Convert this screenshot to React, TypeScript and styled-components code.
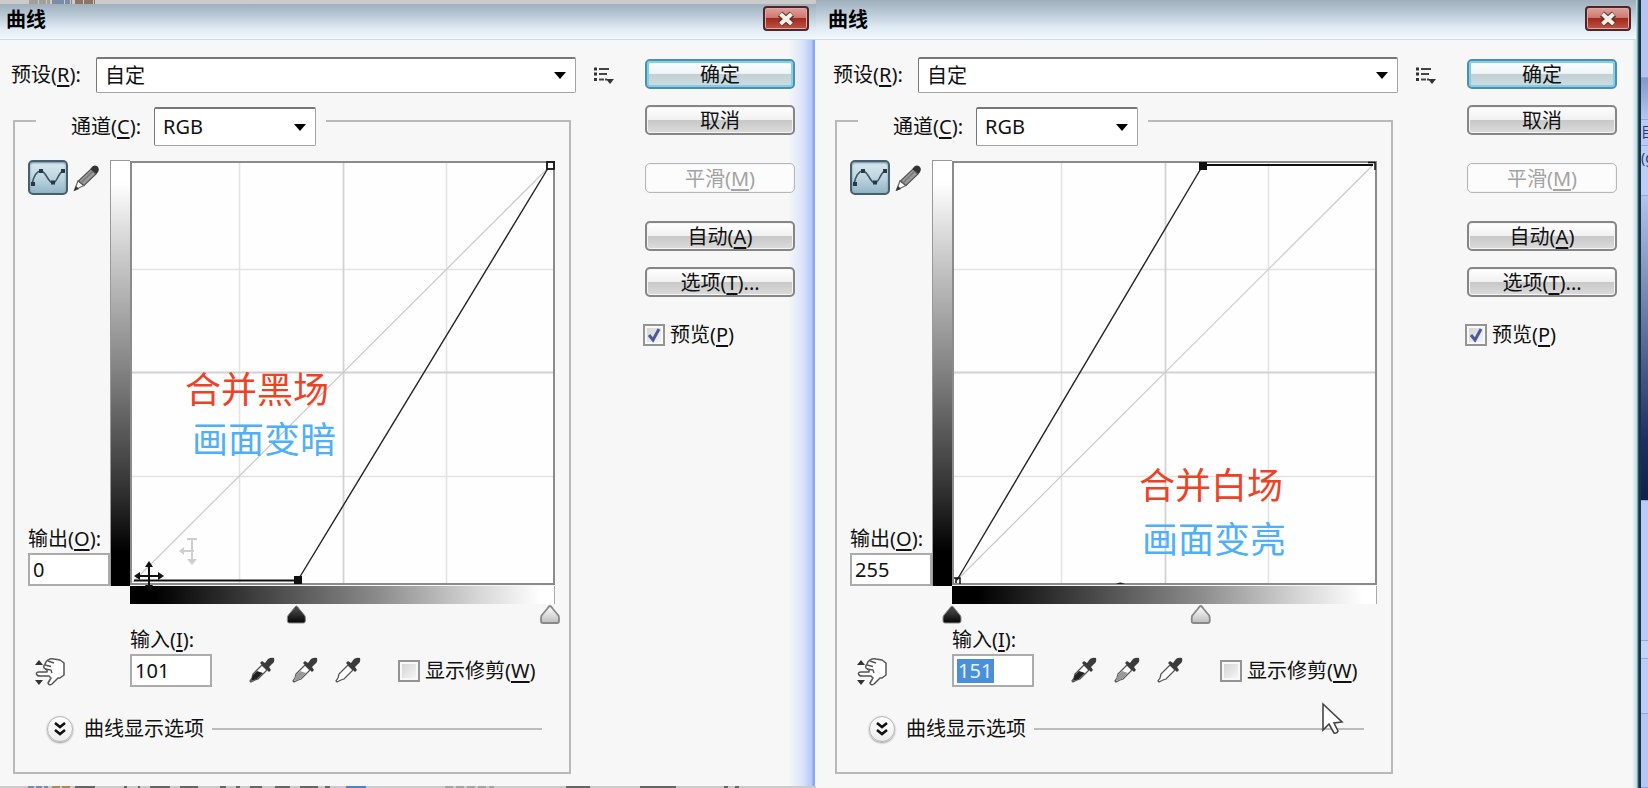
import React, { useId } from "react";
import styled, { createGlobalStyle, css } from "styled-components";

const GlobalStyle = createGlobalStyle`
  * { box-sizing: border-box; }
  body {
    margin: 0;
    background: #f7f7f7;
    color: #111;
    font: 20px/24px "Noto Sans", "Noto Sans CJK SC", sans-serif;
  }
  button, input, select { font: inherit; color: inherit; margin: 0; }
  svg { display: block; }
  u { text-decoration-thickness: 2px; text-underline-offset: 3px; }
`;

const Page = styled.main`
  display: flex;
  min-height: 100vh;
  overflow: hidden;
`;

const Dialog = styled.section<{ $framed?: boolean }>`
  display: flex;
  flex-direction: column;
  flex: 1 1 ${(p) => (p.$framed ? 825 : 816)}px;
  position: relative;
  ${(p) =>
    p.$framed
      ? css`
          background: linear-gradient(to left, #16343c 0 2px, #4b7782 3px, #a9d3e2 4px, #c5e2ec 5px, transparent 9px), #f7f7f7;
        `
      : css`
          background: linear-gradient(to left, #f4f7ff 0 1px, #8ba8e8 1px 3px, #b3c9fb 4px, #dde5fa 14px, transparent 28px), #f7f7f7;
        `}
`;

const Backdrop = styled.div<{ $height: number }>`
  height: ${(p) => p.$height}px;
  flex: none;
  overflow: hidden;
  background: #cbcbcb;
`;

const TitleBar = styled.header<{ $tall?: boolean }>`
  display: flex;
  justify-content: space-between;
  align-items: flex-end;
  height: ${(p) => (p.$tall ? 40 : 36)}px;
  padding: ${(p) => (p.$tall ? "0 5px 8px 12px" : "0 7px 8px 6px")};
  margin-right: ${(p) => (p.$tall ? 5 : 0)}px;
  border-bottom: 1px solid #d3dbe0;
  background: linear-gradient(#9fafbb, #bccbd8 35%, #dfeaf4 70%, #f3f9ff);
`;

const Title = styled.h1`
  margin: 0;
  font-size: 20px;
  line-height: 22px;
  font-weight: 700;
  color: #000;
`;

const CloseButton = styled.button`
  display: grid;
  place-items: center;
  width: 46px;
  height: 25px;
  padding: 0;
  border: 2px solid #4c262b;
  border-radius: 4px;
  background: linear-gradient(#dda09b, #cf7a72 45%, #a02a1c 50%, #bf5548);
  box-shadow: inset 0 0 0 1px #e2a9a4;
`;

const Body = styled.div<{ $framed?: boolean }>`
  display: flex;
  flex: 1;
  justify-content: space-between;
  align-items: flex-start;
  padding: 17px ${(p) => (p.$framed ? "24px 13px 17px" : "21px 11px 11px")};
`;

const Main = styled.div`
  flex: 1;
  display: flex;
  flex-direction: column;
  gap: 14px;
`;

const PresetRow = styled.div`
  display: flex;
  align-items: center;
  margin-right: 30px;
`;

const SelectBox = styled.div<{ $height: number }>`
  display: grid;
  align-items: center;
  flex: 1;
  height: ${(p) => p.$height}px;

  > * { grid-area: 1 / 1; }
  > svg { justify-self: end; margin-right: 9px; pointer-events: none; }
`;

const Select = styled.select`
  appearance: none;
  width: 100%;
  height: 100%;
  padding: 0 32px 0 8px;
  border: 1px solid #a3a3a3;
  border-top: 2px solid #777;
  border-left-color: #777;
  border-radius: 2px;
  background: #fff;
`;

const PresetLabel = styled.label`
  width: 85px;
  white-space: nowrap;
`;

const IconButton = styled.button`
  display: grid;
  place-items: center;
  padding: 0;
  border: 0;
  background: none;
`;

const MenuButton = styled(IconButton)`
  margin-left: 17px;
`;

const Group = styled.div`
  margin: 0 74px 0 2px;
`;

const GroupHead = styled.div`
  display: flex;
  align-items: center;
`;

const edge = "2px solid #b9b9b9";

const LeftCorner = styled.span`
  align-self: flex-end;
  width: 23px;
  height: 26px;
  border-left: ${edge};
  border-top: ${edge};
`;

const RightCorner = styled(LeftCorner)`
  flex: 1;
  margin-left: 10px;
  border-left: 0;
  border-right: ${edge};
`;

const ChannelLabel = styled.label`
  width: 83px;
  margin-left: 35px;
  white-space: nowrap;
`;

const ChannelBox = styled(SelectBox)`
  flex: 0 0 162px;
`;

const GroupBody = styled.div`
  position: relative;
  padding: 14px 14px 30px 13px;
  border: ${edge};
  border-top: 0;
`;

const CurveGrid = styled.div`
  display: grid;
  grid-template-columns: 82px 20px 425px;
  grid-template-rows: 426px auto;
`;

const Tools = styled.div`
  display: flex;
  flex-direction: column;
  justify-content: space-between;
`;

const ToolRow = styled.div`
  display: flex;
  gap: 5px;
  align-items: center;
`;

const CurveTool = styled(IconButton)`
  width: 40px;
  height: 35px;
  border: 2px solid #46606f;
  border-radius: 5px;
  background: linear-gradient(#d8e9f1, #bdd5e1 50%, #93b5c6);
  box-shadow: inset 0 1px 2px #6f8b99;
`;

const OutputRamp = styled.div`
  border: 1px solid #999;
  border-right: 0;
  border-bottom: 0;
  background: linear-gradient(#fff 5%, #ccc 22%, #808080 50%, #303030 78%, #000 92%);
`;

const Graph = styled.div`
  position: relative;
`;

const Note = styled.p<{ $x: number; $y: number; $color: string }>`
  position: absolute;
  left: ${(p) => p.$x}px;
  top: ${(p) => p.$y}px;
  margin: 0;
  font: 36px/48px "Noto Sans CJK SC", sans-serif;
  white-space: nowrap;
  color: ${(p) => p.$color};
`;

const InputRampArea = styled.div`
  grid-column: 3;
`;

const InputRamp = styled.div`
  height: 18px;
  border-right: 1px solid #aaa;
  background: linear-gradient(to right, #000 6%, #404040 30%, #8a8a8a 58%, #d6d6d6 82%, #fff 97%);
`;

const Sliders = styled.div`
  display: grid;
  width: 438px;
  margin-left: -9px;

  > * { grid-area: 1 / 1; }
`;

const Range = styled.input`
  width: 100%;
  height: 100%;
  opacity: 0;
`;

const Field = styled.div`
  display: flex;
  flex-direction: column;
  gap: 2px;
  width: 82px;
  white-space: nowrap;
`;

const NumberInput = styled.input`
  width: 100%;
  height: 33px;
  padding: 0 3px;
  border: 2px solid #ababab;
  background: #fff;
`;

const Highlight = styled.label`
  display: flex;
  align-items: center;
  height: 33px;
  padding: 0 3px;
  border: 2px solid #ababab;
  background: #fff;
`;

const SelectedInput = styled.input`
  width: 37px;
  height: 24px;
  padding: 0 1px;
  border: 0;
  background: #4a90d9;
  color: #e8f2ff;
`;

const ControlRow = styled.div`
  display: flex;
  align-items: flex-end;
  margin-top: 3px;
`;

const HandButton = styled(IconButton)`
  margin: 0 64px 0 6px;
`;

const Droppers = styled.div`
  display: flex;
  gap: 17px;
  margin: 0 37px 4px;
`;

const Check = styled.label`
  display: flex;
  align-items: center;
  gap: 5px;
  white-space: nowrap;
`;

const ClipCheck = styled(Check)`
  margin-bottom: 4px;
`;

const Tick = styled.span`
  display: grid;
  place-items: center;

  > * { grid-area: 1 / 1; }
  > svg { pointer-events: none; }
`;

const TickBox = styled.input`
  appearance: none;
  width: 22px;
  height: 22px;
  border: 2px solid #949494;
  background: linear-gradient(135deg, #d0d0d0, #fafafa);
  box-shadow: inset 0 0 0 2px #f8f8f8;
`;

const OptionsRow = styled.div`
  display: flex;
  align-items: center;
  margin: 29px 13px 0 19px;
`;

const Expand = styled.button`
  display: flex;
  align-items: center;
  gap: 11px;
  height: 26px;
  padding: 0;
  border: 0;
  background: none;
`;

const Round = styled.span`
  display: grid;
  place-items: center;
  width: 26px;
  height: 26px;
  border: 1px solid #b5b5b5;
  border-radius: 50%;
  background: linear-gradient(#fff, #eee);
  box-shadow: 0 1px 2px #999;
`;

const Rule = styled.span`
  flex: 1;
  height: 2px;
  margin-left: 8px;
  background: #bcbcbc;
`;

const Actions = styled.div`
  display: flex;
  flex-direction: column;
  width: 150px;
  padding-top: 2px;
`;

const ActionButton = styled.button<{ $gap?: number; $primary?: boolean }>`
  height: 30px;
  margin-top: ${(p) => p.$gap ?? 0}px;
  padding: 2px 0 0;
  border: 2px solid ${(p) => (p.$primary ? "#4e8fae" : "#868686")};
  border-radius: 5px;
  background: ${(p) =>
    p.$primary
      ? "linear-gradient(#fff, #eef4f6 48%, #c3d0d4 52%, #cfdde1)"
      : "linear-gradient(#fff, #f1f1f1 48%, #c8c8c8 52%, #dcdcdc)"};
  box-shadow: inset 0 0 0 ${(p) => (p.$primary ? "2px #7fd0ee" : "1px #f4f4f4")};
  line-height: 24px;
  white-space: nowrap;

  &:disabled {
    border: 1px solid #b4b8ba;
    background: #fcfcfc;
    color: #a3a3a3;
  }
`;

const PreviewCheck = styled(Check)`
  margin: 26px 0 0 -2px;
`;

const Pointer = styled.svg`
  position: absolute;
  left: 485px;
  top: 556px;
`;

const Behind = styled.aside`
  display: flex;
  flex-direction: column;
  flex: 0 0 7px;
  overflow: hidden;
  font-size: 14px;
  line-height: 24px;
  color: #26377a;
`;

const Slab = styled.div<{ $h: number; $bg: string }>`
  flex: ${(p) => p.$h} 0 0;
  overflow: hidden;
  background: ${(p) => p.$bg};
  border-bottom: 1px solid #92a7dc;
`;

const Caret = () => (
  <svg width="14" height="8" viewBox="0 0 14 8" aria-hidden="true">
    <path d="M1 1H13L7 8Z" fill="#000" />
  </svg>
);

const ListIcon = () => (
  <svg width="22" height="20" viewBox="0 0 22 20" aria-hidden="true">
    <path d="M1 4h3M1 9h3M1 14.500h3" stroke="#333" strokeWidth="3" />
    <path d="M6 4h10M6 9h8M6 14.500h5M12 14.500h2" stroke="#444" strokeWidth="2" />
    <path d="M13 14h8l-4 5z" fill="#333" />
  </svg>
);

const CurveIcon = () => (
  <svg width="36" height="30" viewBox="0 0 36 30" aria-hidden="true">
    <path d="M2 21C4 12 7 8 11 8C16 8 18 20 23 20C27 20 28 10 33 8" fill="none" stroke="#44545d" strokeWidth="1.600" />
    <path d="M1 19h4v4h-4zM9 6h4v4h-4zM21 17.500h4v4h-4zM31 6h4v4h-4z" fill="#273942" />
  </svg>
);

const PencilIcon = () => (
  <svg width="28" height="28" viewBox="0 0 28 28" aria-hidden="true">
    <path d="M1.500 26L5 17L11 21.500Z" fill="#fff" stroke="#666" strokeWidth="1.200" />
    <path d="M5.500 17L18 5L23 10L11 21.500Z" fill="#9a9a9a" stroke="#555" strokeWidth="1.200" />
    <path d="M8 19L20 7" stroke="#777" strokeWidth="1.500" />
    <path d="M17.500 5Q20 0 24 2Q28 5 23.500 10Z" fill="#333" />
    <path d="M1 27L3 22L6 25Z" fill="#333" />
  </svg>
);

const DropperIcon = ({ fill }: { fill: string }) => (
  <svg width="26" height="26" viewBox="0 0 26 26" aria-hidden="true">
    <path d="M13 8L4 17L3 21L1 24L2 25L6 23L9 22L18 13Z" fill="#fff" stroke="#555" strokeWidth="1.300" />
    <path d="M8 14L4 18L2 24L8 22L14 16Z" fill={fill} />
    <path d="M11 6L13 4L16 6L19 2Q22 0 25 1Q26 5 23 7L20 10L22 13L20 15Z" fill="#3b3b3b" />
  </svg>
);

const HandIcon = () => (
  <svg width="32" height="30" viewBox="0 0 32 30" aria-hidden="true">
    <path d="M1 8L5 3L9 8ZM1 23H9L5 28Z" fill="#333" />
    <path
      d="M13 15H5Q2 15 2.500 17Q3 19 6 19H15L17 21L14 26Q15 29 18 27L24 21H26L30 18V6L26 3L20 2Q17 1 14 3Q12 4 11 7Q9 9 10 11L13 13Z"
      fill="#fff"
      stroke="#555"
      strokeWidth="1.500"
      strokeLinejoin="round"
    />
    <path d="M14 4L20 6M11 8L17 9.500M11 12L17 13L18 16" fill="none" stroke="#555" strokeWidth="1.400" />
  </svg>
);

const CloseIcon = () => (
  <svg width="22" height="18" viewBox="0 0 22 18" aria-hidden="true">
    <path d="M5 4L17 14M17 4L5 14" stroke="#5b3435" strokeWidth="6.500" />
    <path d="M5.500 4L16.500 14M16.500 4L5.500 14" stroke="#f5efe4" strokeWidth="4" />
  </svg>
);

const MoveCursor = ({ color, partial }: { color: string; partial?: boolean }) => (
  <g fill={color} stroke={color}>
    <path d={partial ? "M0 -12V12M-11 0H2M-5 -12H5" : "M0 -13V13M-13 0H13"} strokeWidth="2" fill="none" />
    {partial ? (
      <path d="M-5 8H5L0 14ZM-8 -4V4L-13 0Z" stroke="none" />
    ) : (
      <path d="M-4 -9H4L0 -15ZM-4 9H4L0 15ZM-9 -4V4L-15 0ZM9 -4V4L15 0Z" stroke="none" />
    )}
  </g>
);

interface CurveProps {
  kind: "black" | "white";
}

const CurveGraph = ({ kind }: CurveProps) => (
  <svg width="425" height="426" viewBox="0 0 425 426" overflow="visible" role="img" aria-label="曲线">
    <rect x="1" y="2" width="423" height="423" fill="#fefefe" />
    <path d="M109.500 3V424M316.500 3V424M2 109.500H423M2 316.500H423" stroke="#e3e3e3" strokeWidth="1.500" />
    <path d="M213.500 3V424M2 212.500H423" stroke="#d2d2d2" strokeWidth="1.800" />
    <path d="M3 422L421 5" stroke="#cacaca" strokeWidth="1.200" />
    <rect x="1" y="2" width="423" height="422" fill="none" stroke="#8b8b8b" strokeWidth="2" />
    {kind === "black" ? (
      <>
        <path d="M4 420.500H168" stroke="#111" strokeWidth="2" />
        <path d="M168 420L420 5" stroke="#222" strokeWidth="1.400" />
        <rect x="164" y="416" width="8" height="8" fill="#111" />
        <rect x="417" y="2" width="7" height="7" fill="#fff" stroke="#111" strokeWidth="1.800" />
        <g transform="translate(19 416)"><MoveCursor color="#111" /></g>
        <g transform="translate(62 391)"><MoveCursor color="#cfcfcf" partial /></g>
      </>
    ) : (
      <>
        <path d="M5 420L251 5" stroke="#222" strokeWidth="1.400" />
        <path d="M251 5H421" stroke="#111" strokeWidth="2" />
        <rect x="247" y="2" width="8" height="8" fill="#111" />
        <path d="M2 418H8V424M4 418V423M416 2.500H423V10" fill="none" stroke="#111" strokeWidth="1.500" />
        <path d="M164 424Q168 421 173 424Z" fill="#222" />
      </>
    )}
  </svg>
);

const thumb = "M9 1Q10 1 12 4L17 10Q18 11 18 13V16Q18 18 16 18H2Q0 18 0 16V13Q0 11 1 10L6 4Q8 1 9 1Z";

const Thumbs = ({ black, white }: { black: number; white: number }) => (
  <svg width="438" height="21" viewBox="0 0 438 21" overflow="visible" aria-hidden="true">
    <defs>
      <linearGradient id="thumbLight" x2="0" y2="1">
        <stop offset="0.200" stopColor="#f2f2f2" />
        <stop offset="1" stopColor="#bdbdbd" />
      </linearGradient>
      <linearGradient id="thumbDark" x2="0" y2="1">
        <stop offset="0.200" stopColor="#444" />
        <stop offset="1" stopColor="#050505" />
      </linearGradient>
    </defs>
    <path transform={`translate(${(black / 255) * 420} 1)`} d={thumb} fill="url(#thumbDark)" stroke="#888" />
    <path transform={`translate(${(white / 255) * 420} 1)`} d={thumb} fill="url(#thumbLight)" stroke="#888" strokeWidth="1.800" />
  </svg>
);

const CurvesDialog = ({ kind }: CurveProps) => {
  const id = useId();
  const framed = kind === "white";
  const black = framed ? 0 : 101;
  const white = framed ? 151 : 255;
  return (
    <Dialog $framed={framed} aria-labelledby={`${id}title`}>
      {!framed && (
        <Backdrop $height={4} aria-hidden="true">
          <svg width="500" height="4">
            <path d="M29 2H50" stroke="#a19f98" strokeWidth="4" strokeDasharray="9 1 7 1" />
            <path d="M52 2H72" stroke="#7d8ca3" strokeWidth="4" strokeDasharray="12 1 5 1" />
            <path d="M75 2H95" stroke="#8c7466" strokeWidth="4" strokeDasharray="8 1 9 1" />
          </svg>
        </Backdrop>
      )}
      <TitleBar $tall={framed}>
        <Title id={`${id}title`}>曲线</Title>
        <CloseButton type="button" aria-label="关闭"><CloseIcon /></CloseButton>
      </TitleBar>
      <Body $framed={framed}>
        <Main>
          <PresetRow>
            <PresetLabel htmlFor={`${id}preset`}>预设(<u>R</u>):</PresetLabel>
            <SelectBox $height={36}>
              <Select id={`${id}preset`}><option>自定</option></Select>
              <Caret />
            </SelectBox>
            <MenuButton type="button" aria-label="预设选项"><ListIcon /></MenuButton>
          </PresetRow>
          <Group>
            <GroupHead>
              <LeftCorner />
              <ChannelLabel htmlFor={`${id}channel`}>通道(<u>C</u>):</ChannelLabel>
              <ChannelBox $height={39}>
                <Select id={`${id}channel`}><option>RGB</option></Select>
                <Caret />
              </ChannelBox>
              <RightCorner />
            </GroupHead>
            <GroupBody>
              <CurveGrid>
                <Tools>
                  <ToolRow>
                    <CurveTool type="button" aria-label="编辑点"><CurveIcon /></CurveTool>
                    <IconButton type="button" aria-label="铅笔"><PencilIcon /></IconButton>
                  </ToolRow>
                  <Field>
                    <label htmlFor={`${id}out`}>输出(<u>O</u>):</label>
                    <NumberInput id={`${id}out`} defaultValue={framed ? "255" : "0"} />
                  </Field>
                </Tools>
                <OutputRamp />
                <Graph>
                  <CurveGraph kind={kind} />
                  {framed ? (
                    <>
                      <Note $x={187} $y={299} $color="#ee4227">合并白场</Note>
                      <Note $x={190} $y={353} $color="#4fb0fa">画面变亮</Note>
                    </>
                  ) : (
                    <>
                      <Note $x={55} $y={203} $color="#ee4227">合并黑场</Note>
                      <Note $x={62} $y={253} $color="#4fb0fa">画面变暗</Note>
                    </>
                  )}
                </Graph>
                <InputRampArea>
                  <InputRamp />
                  <Sliders>
                    <Thumbs black={black} white={white} />
                    <Range type="range" max={255} defaultValue={black} aria-label="黑场" />
                    <Range type="range" max={255} defaultValue={white} aria-label="白场" />
                  </Sliders>
                </InputRampArea>
              </CurveGrid>
              <ControlRow>
                <HandButton type="button" aria-label="在图像上调整"><HandIcon /></HandButton>
                <Field>
                  <label htmlFor={`${id}in`}>输入(<u>I</u>):</label>
                  {framed ? (
                    <Highlight><SelectedInput id={`${id}in`} defaultValue="151" /></Highlight>
                  ) : (
                    <NumberInput id={`${id}in`} defaultValue="101" />
                  )}
                </Field>
                <Droppers>
                  <IconButton type="button" aria-label="黑场吸管"><DropperIcon fill="#222" /></IconButton>
                  <IconButton type="button" aria-label="灰场吸管"><DropperIcon fill="#999" /></IconButton>
                  <IconButton type="button" aria-label="白场吸管"><DropperIcon fill="none" /></IconButton>
                </Droppers>
                <ClipCheck>
                  <Tick><TickBox type="checkbox" /></Tick>
                  <span>显示修剪(<u>W</u>)</span>
                </ClipCheck>
              </ControlRow>
              <OptionsRow>
                <Expand type="button">
                  <Round>
                    <svg width="14" height="16" viewBox="0 0 14 16" aria-hidden="true">
                      <path d="M2 2L7 6L12 2M2 9L7 13L12 9" fill="none" stroke="#111" strokeWidth="2.600" />
                    </svg>
                  </Round>
                  曲线显示选项
                </Expand>
                <Rule />
              </OptionsRow>
              {framed && (
                <Pointer width="22" height="34" viewBox="0 0 22 34" aria-hidden="true">
                  <path d="M1 2V28L7 22L12 31Q15 32 16 29L12 21L20 20Z" fill="#fff" stroke="#444" strokeWidth="1.600" />
                </Pointer>
              )}
            </GroupBody>
          </Group>
        </Main>
        <Actions>
          <ActionButton type="button" $primary>确定</ActionButton>
          <ActionButton type="button" $gap={16}>取消</ActionButton>
          <ActionButton type="button" $gap={28} disabled>平滑(<u>M</u>)</ActionButton>
          <ActionButton type="button" $gap={28}>自动(<u>A</u>)</ActionButton>
          <ActionButton type="button" $gap={16}>选项(<u>T</u>)...</ActionButton>
          <PreviewCheck>
            <Tick>
              <TickBox type="checkbox" defaultChecked />
              <svg width="16" height="18" viewBox="0 0 16 18" aria-hidden="true">
                <path d="M3 9L7 14L13 3" fill="none" stroke="#4c5b94" strokeWidth="3" />
              </svg>
            </Tick>
            <span>预览(<u>P</u>)</span>
          </PreviewCheck>
        </Actions>
      </Body>
      {!framed && (
        <Backdrop $height={2} aria-hidden="true">
          <svg width="816" height="2">
            <path d="M28 1H48" stroke="#6f8fb5" strokeWidth="2" strokeDasharray="6 2" />
            <path d="M52 1H72" stroke="#b08a50" strokeWidth="2" strokeDasharray="8 2" />
            <path d="M75 1H95M124 1H127M138 1H140M150 1H170M180 1H198M220 1H226M236 1H240M250 1H262M275 1H290M300 1H318M325 1H330M566 1H590M640 1H676M724 1H728M735 1H739" stroke="#666" strokeWidth="2" />
            <path d="M346 1H366" stroke="#4b83d8" strokeWidth="2" />
            <path d="M445 1H494" stroke="#a5a5a5" strokeWidth="2" strokeDasharray="8 3" />
          </svg>
        </Backdrop>
      )}
    </Dialog>
  );
};

const App = () => (
  <>
    <GlobalStyle />
    <Page>
      <CurvesDialog kind="black" />
      <CurvesDialog kind="white" />
      <Behind aria-hidden="true">
        <Slab $h={78} $bg="#b3c4f2" />
        <Slab $h={41} $bg="linear-gradient(#8099cc, #b3c6f4)" />
        <Slab $h={26} $bg="#b9cafa">目</Slab>
        <Slab $h={49} $bg="#bccdfb">(g</Slab>
        <Slab $h={308} $bg="linear-gradient(#b0c3f1, #8495c0 25%, #1c2f66 80%, #10204c)" />
        <Slab $h={140} $bg="#b9cafa" />
        <Slab $h={18} $bg="#c4d3fa" />
        <Slab $h={54} $bg="#bccdfb" />
        <Slab $h={74} $bg="#b3c6f6" />
      </Behind>
    </Page>
  </>
);

export default App;
